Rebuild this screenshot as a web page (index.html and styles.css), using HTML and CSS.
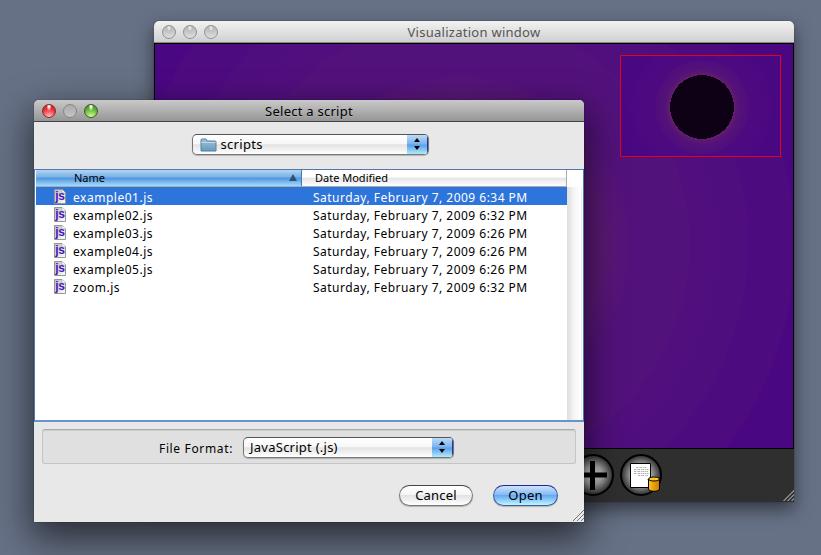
FILE: index.html
```
<!DOCTYPE html>
<html lang="en">
<head>
<meta charset="utf-8">
<title>Select a script</title>
<link rel="stylesheet" href="styles.css">
</head>
<body>
<svg class="defs" width="0" height="0">
  <defs>
    <linearGradient id="paper" x2="1" y2="1"><stop stop-color="#bbb"/><stop offset="1" stop-color="#fff"/></linearGradient>
    <linearGradient id="folderFill" x2="0" y2="1"><stop stop-color="#a0c4de"/><stop offset="1" stop-color="#6699bd"/></linearGradient>
    <linearGradient id="gold"><stop stop-color="#ffc21c"/><stop offset="1" stop-color="#d07800"/></linearGradient>
    <symbol id="js" viewBox="0 0 12 15">
      <path d="M.5.5h7.5l3.5 3.5v10.500H.5z" fill="url(#paper)" stroke="#969696"/>
      <path d="M8 .5V4h3.500" fill="#fff" stroke="#aaa" stroke-width=".7"/>
      <text x="1.300" y="10.800" class="js-text">js</text>
    </symbol>
    <symbol id="grip" viewBox="0 0 11 11"><path d="M0 11L11 0M4 11l7-7M8 11l3-3" fill="none" stroke="#777"/><path d="M1 11L11 1M5 11l6-6M9 11l2-2" fill="none" stroke="#eee" stroke-width=".5"/></symbol>
  </defs>
</svg>

<section class="window visual">
  <header class="titlebar"><div class="lights"><i></i><i></i><i></i></div><h1>Visualization window</h1></header>
  <div class="canvas">
    <div class="overview"><svg width="64" height="64"><circle cx="32" cy="32" r="32" shape-rendering="crispEdges" fill="#0e0015"/></svg></div>
  </div>
  <footer class="tools">
    <div class="tool"><svg width="42" height="42"><path d="M20.500 7v29M6 21h29" stroke="#000" stroke-width="5"/></svg></div>
    <div class="tool"><svg width="42" height="42">
      <path d="M10.500 9.500h20v24h-20z" fill="#fff" stroke="#000"/>
      <path d="M16 13.500h11M14 15.500h15M14 17.500h14M14 19.500h15M18 21.500h10M27 25.500h3" stroke="#999" stroke-width=".8" stroke-dasharray="2 .7 1 .5"/>
      <path d="M28.500 25v10c0 3 11 3 11 0V25" fill="url(#gold)" stroke="#000"/>
      <ellipse cx="34" cy="25" rx="5.500" ry="2" fill="#ffc928" stroke="#000"/>
    </svg></div>
    <svg class="grip" width="11" height="11"><use href="#grip"/></svg>
  </footer>
</section>

<section class="window dialog">
  <header class="titlebar"><div class="lights"><i class="red"></i><i></i><i class="green"></i></div><h1>Select a script</h1></header>
  <div class="location">
    <div class="select"><svg class="folder" width="17" height="14"><path d="M1 13V2q0-1 1-1h4l1 2h8q1 0 1 1v9z" fill="url(#folderFill)" stroke="#5782a0"/><path d="M1.500 4.500h14" stroke="#bcd8e9"/></svg><span class="scripts">scripts</span>
      <div class="arrows"><svg width="21" height="20"><path d="M10 4l3 4h-6zM10 16l3-4h-6z"/></svg></div></div>
  </div>
  <div class="files">
    <div class="head"><div class="name">Name<svg width="8" height="7"><path d="M4 0l4 7H0z" fill="#2c5079"/></svg></div><div class="date">Date Modified</div></div>
    <div class="body">
      <div class="rows">
        <div class="row selected"><svg width="12" height="15"><use href="#js"/></svg><span class="file">example01.js</span><span class="when">Saturday, February 7, 2009 6:34 PM</span></div>
        <div class="row"><svg width="12" height="15"><use href="#js"/></svg><span class="file">example02.js</span><span class="when">Saturday, February 7, 2009 6:32 PM</span></div>
        <div class="row"><svg width="12" height="15"><use href="#js"/></svg><span class="file">example03.js</span><span class="when">Saturday, February 7, 2009 6:26 PM</span></div>
        <div class="row"><svg width="12" height="15"><use href="#js"/></svg><span class="file">example04.js</span><span class="when">Saturday, February 7, 2009 6:26 PM</span></div>
        <div class="row"><svg width="12" height="15"><use href="#js"/></svg><span class="file">example05.js</span><span class="when">Saturday, February 7, 2009 6:26 PM</span></div>
        <div class="row"><svg width="12" height="15"><use href="#js"/></svg><span class="file">zoom.js</span><span class="when">Saturday, February 7, 2009 6:32 PM</span></div>
      </div>
      <div class="scroll"></div>
    </div>
  </div>
  <div class="format"><label>File Format:</label>
    <div class="select"><span class="kind">JavaScript (.js)</span><div class="arrows"><svg width="21" height="20"><path d="M10 4l3 4h-6zM10 16l3-4h-6z"/></svg></div></div>
  </div>
  <div class="actions"><button>Cancel</button><button class="default">Open</button></div>
  <svg class="grip" width="11" height="11"><use href="#grip"/></svg>
</section>
</body>
</html>
```
FILE: styles.css
```
* { box-sizing: border-box; }
body { margin: 0; width: 821px; height: 555px; overflow: hidden; position: relative; background: #677186; font: 12px/18px "Noto Sans", sans-serif; color: #000; }
.defs { position: absolute; }
svg { display: block; flex: none; }
.window { position: absolute; display: flex; flex-direction: column; border-radius: 5px 5px 0 0; }
.visual { left: 154px; top: 21px; width: 640px; height: 481px; background: #2f2f2f; box-shadow: 0 0 1px #000a, 0 7px 18px #0008; }
.dialog { left: 34px; top: 100px; width: 550px; height: 422px; background: #e8e8e8; box-shadow: 0 0 1px #000c, 0 14px 36px 3px #0009; }
.titlebar { display: grid; grid-template-columns: 69px 1fr 69px; height: 22px; flex: none; border-radius: 5px 5px 0 0; background: linear-gradient(#f2f2f2, #d0d0d0); border-bottom: 1px solid #888; }
.dialog .titlebar { background: linear-gradient(#c9c9c9, #969696); border-bottom-color: #444; }
.titlebar h1 { margin: 0; font-size: 13px; font-weight: 400; line-height: 22px; text-align: center; white-space: nowrap; color: #555; }
.visual h1 { letter-spacing: .27px; }
.dialog h1 { color: #000; letter-spacing: .25px; text-shadow: 0 1px #ccc6; }
.lights { display: flex; gap: 7px; padding: 4px 0 0 8px; }
.lights i { width: 14px; height: 14px; border-radius: 50%; border: 1px solid #929292; background: radial-gradient(ellipse at 50% 15%, #eee 0 4%, #bbb8 25%, transparent 45%), linear-gradient(#b4b4b4, #dedede); }
.dialog .lights i { background: linear-gradient(#aaa, #c5c5c5); border-color: #858585; }
.dialog .lights .red { border-color: #832b30; background: radial-gradient(ellipse at 50% 12%, #fff 0 6%, transparent 30%), radial-gradient(circle at 50% 100%, #ffc4c4, #ed3139 60%, #b5232c); }
.dialog .lights .green { border-color: #375e20; background: radial-gradient(ellipse at 50% 12%, #fff 0 6%, transparent 30%), radial-gradient(circle at 50% 100%, #dcff9d, #66b53a 60%, #3c7a20); }
.canvas { height: 406px; flex: none; border: 1px solid #000; border-top: 0; box-shadow: inset 0 1px #000; display: flex; justify-content: flex-end; padding: 12px 12px 0 0; background: radial-gradient(circle at 306px 202px, #5a1a73 140px, #571777 150px, #54137a 168px, #52127b 171px, #52127b 228px, #500f7d 230px, #4f0e7e 286px, #4d0b80 288px, #4d0b80 332px, #4a0782 335px); }
.overview { width: 161px; height: 102px; border: 1px solid #e5001b; display: grid; place-items: center; padding: 1px 0 0 3px; background: radial-gradient(circle at 81px 51px, #6b2468 31px, #5a1872 34px, #53117a 38px, #500e7d 46px, #4d0a80 47px, #4b0881 69px, #4a0782 70px); }
.tools { flex: 1; display: flex; padding: 5px 0 0 418px; gap: 6px; position: relative; }
.tool { width: 42px; height: 42px; border: 2px solid #000; border-radius: 50%; background: radial-gradient(circle, #ddd 0, #aaa 35%, #333 72%); }
.tool svg { margin: -2px; }
.grip { position: absolute; right: 0; bottom: 1px; }
.location { height: 47px; flex: none; display: flex; justify-content: center; padding: 12px 0 0 2px; }
.select { height: 21px; width: 237px; display: flex; align-items: center; border: 1px solid #777; border-top-color: #555; border-radius: 5px; background: linear-gradient(#fff, #f7f7f7 45%, #e3e3e3 52%, #fff); box-shadow: 0 1px 1px #8888; padding-left: 7px; overflow: hidden; font-size: 13px; line-height: 16px; white-space: nowrap; }
.scripts, .kind { margin-top: -2px; }
.scripts { margin-left: 4px; letter-spacing: .3px; }
.arrows { width: 21px; height: 21px; flex: none; margin-left: auto; border-right: 1px solid #20389a; border-top: 1px solid #20289a; background: linear-gradient(#bddbf7, #78b3ef 45%, #5c9fe8 50%, #b9f3ff); }
.arrows svg { margin-top: -1px; }
.files { height: 253px; flex: none; border: 1px solid #4f79a9; border-bottom: 2px solid #6795cb; padding-left: 1px; background: #fff; display: flex; flex-direction: column; }
.head { height: 17px; flex: none; width: 531px; display: flex; font-size: 11px; line-height: 15px; border-bottom: 1px solid #aaa; border-right: 1px solid #aaa; background: linear-gradient(#fff 45%, #e4e4e4 50%, #fff); }
.name { width: 266px; display: flex; align-items: flex-start; justify-content: space-between; padding: 0 4px 0 38px; border-right: 1px solid #397bc6; background: linear-gradient(#b5d5f3, #76b0e7 45%, #4f95dc 50%, #a4dcff); }
.name svg { margin-top: 4px; }
.date { padding-left: 13px; }
.body { flex: 1; display: flex; }
.rows { width: 531px; }
.row { height: 18px; display: grid; grid-template-columns: 37px 240px 1fr; color: #000; white-space: nowrap; line-height: 21px; }
.row svg { margin: 2px 0 0 18px; }
.selected { color: #fff; background: #2d75da; }
.file { letter-spacing: .52px; }
.when { letter-spacing: .48px; }
.js-text { font: bold 12px "Liberation Sans", sans-serif; letter-spacing: -.3px; fill: #4718bd; }
.scroll { width: 15px; background: linear-gradient(90deg, #ddd, #f5f5f5 45%, #fff 90%, #e5e5e5); }
.format { height: 35px; flex: none; margin: 7px 8px 0; display: flex; align-items: center; padding-left: 116px; border: 1px solid #c5c5c5; border-top-color: #aaa; border-radius: 3px; background: #e0e0e0; box-shadow: inset 0 1px #ccc; }
.format label { width: 84px; padding-top: 4px; letter-spacing: .65px; white-space: nowrap; }
.format .select { width: 211px; margin-top: 2px; }
.kind { letter-spacing: .25px; margin-left: -1px; }
.actions { display: flex; gap: 20px; justify-content: flex-end; padding: 21px 26px 0 0; }
button { width: 74px; height: 21px; padding: 0; border: 1px solid #777; border-top-color: #444; border-radius: 11px; font: 13px/17px "Noto Sans", sans-serif; letter-spacing: .2px; color: #000; background: linear-gradient(#fff, #f5f5f5 45%, #e3e3e3 50%, #fff); box-shadow: 0 1px 1px #7777; }
.default { width: 65px; border-color: #3d5f9c; border-top-color: #20249a; background: linear-gradient(#cfe4fb, #85baf5 45%, #65a8f3 50%, #bff5ff); }
```
